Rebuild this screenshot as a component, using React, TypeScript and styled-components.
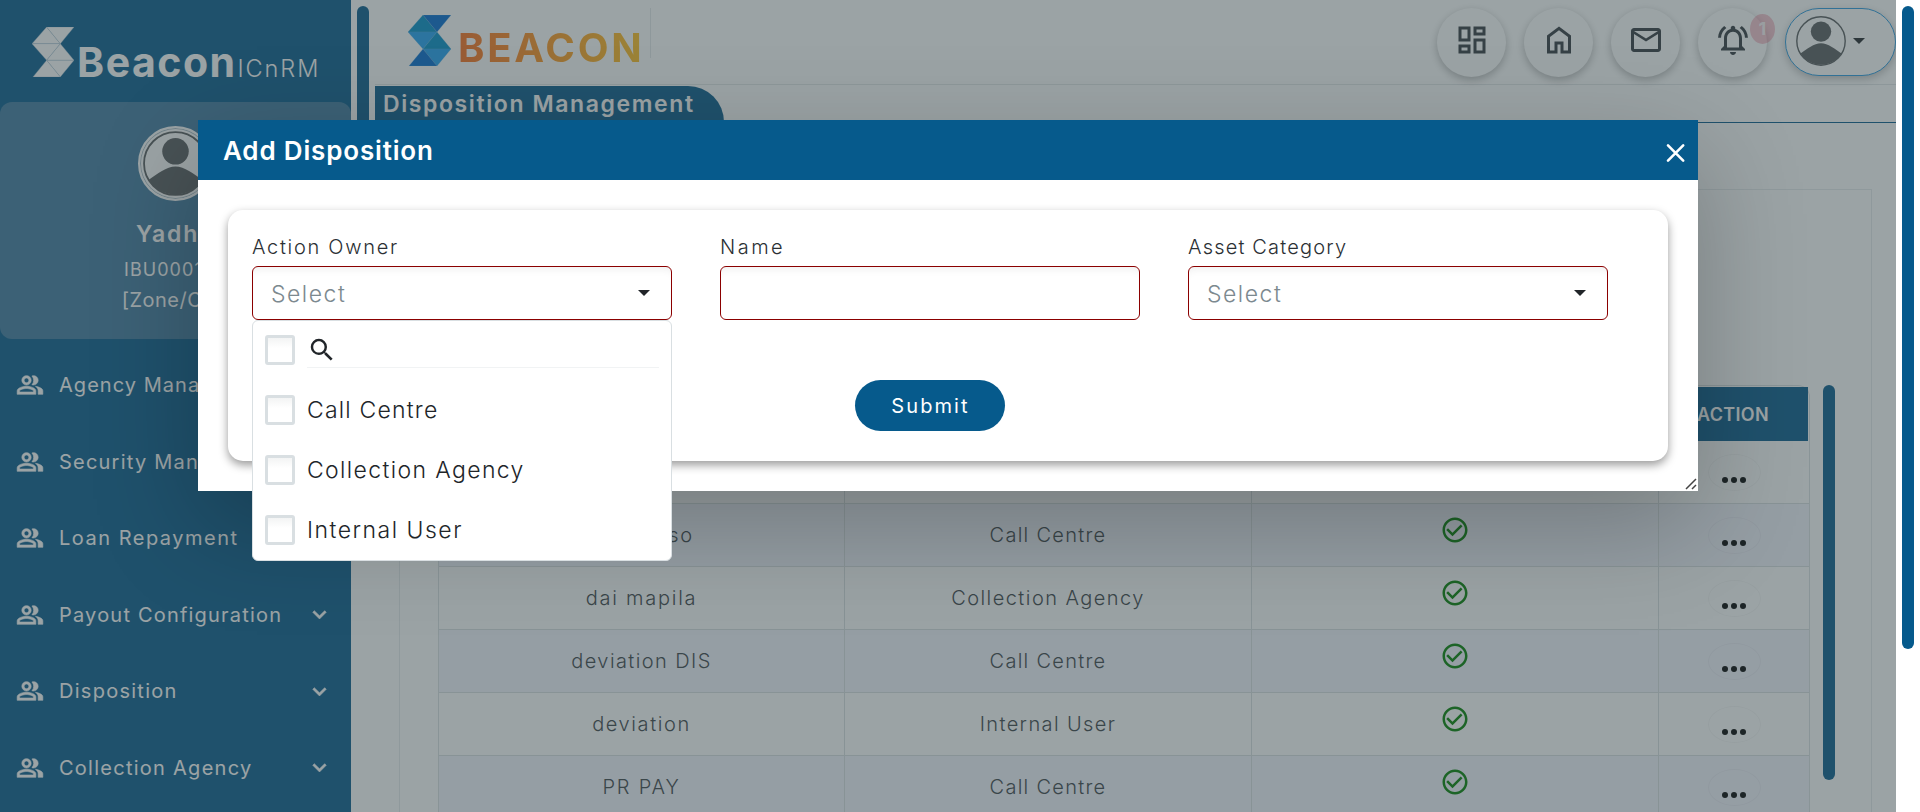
import React from "react";
import styled, { createGlobalStyle, css } from "styled-components";
import {
  MdCheckCircleOutline,
  MdExpandMore,
  MdOutlineDashboard,
  MdOutlineMail,
  MdOutlineNotificationsActive,
  MdOutlinePeopleAlt,
  MdSearch,
} from "react-icons/md";

const blue = "#065a8c";

const GlobalStyle = createGlobalStyle`
  *, *::before, *::after { box-sizing: border-box; }
  html, body { margin: 0; height: 100%; overflow: hidden; background: #fff; }
  body { font-family: Inter, Montserrat, "Open Sans", sans-serif; font-weight: 300; color: #212529; }
  button { font: inherit; padding: 0; border: 0; cursor: pointer; }
  svg { display: block; flex: none; }
`;

const Page = styled.div`
  position: relative;
  display: flex;
  width: 1920px;
  height: 812px;
  overflow: hidden;
`;

/* text with a tracking value, in pixels */
const tracked = css<{ $track?: number }>`
  letter-spacing: ${({ $track = 1.3 }) => $track}px;
  white-space: nowrap;
`;

/* ---------- sidebar ---------- */

const Sidebar = styled.aside`
  flex: none;
  width: 351px;
  background: ${blue};
  color: #fff;
  overflow: hidden;
`;

const SideBrand = styled.div`
  display: flex;
  height: 102px;
  padding: 27px 0 0 32px;
`;

const SideBrandName = styled.span`
  ${tracked}
  margin: 10px 0 0 3px;
  font-size: 41px;
  line-height: 50px;
  font-weight: 700;
`;

const SideBrandSuffix = styled.span`
  ${tracked}
  margin: 26px 0 0 1px;
  font-size: 23.5px;
  line-height: 32px;
  font-weight: 300;
`;

const ProfileCard = styled.section`
  display: flex;
  flex-direction: column;
  align-items: center;
  height: 237px;
  padding-top: 24px;
  border-radius: 12px;
  background: #407aa0;
`;

const AvatarRing = styled.div`
  display: grid;
  place-items: center;
  width: 75px;
  height: 75px;
  border: 2px solid #fff;
  border-radius: 50%;
  background: #fff;
  box-shadow: inset 0 0 0 1px #aebfc9;
`;

const ProfileName = styled.div`
  ${tracked}
  margin-top: 17px;
  font-size: 23px;
  line-height: 32px;
  font-weight: 600;
`;

const ProfileLine = styled.div<{ $size: number }>`
  ${tracked}
  margin-top: 4px;
  font-size: ${({ $size }) => $size}px;
  line-height: 31px;
  font-weight: 400;
  & + & { margin-top: 0; }
`;

const SideNav = styled.nav`
  padding-top: 8px;
`;

const SideLink = styled.a`
  display: flex;
  align-items: center;
  height: 76.5px;
  padding: 0 18px 0 16px;
  svg path:not([fill="none"]) { stroke: currentColor; stroke-width: 0.5; }
  svg path[fill="none"] { stroke: none; }
`;

const SideLabel = styled.span`
  ${tracked}
  flex: 1;
  margin-left: 15px;
  font-size: 20px;
  font-weight: 400;
`;

/* ---------- scrollbars ---------- */

const ScrollTrack = styled.div`
  flex: none;
  width: 24px;
  padding: 6px 0 0 6px;
  background: #fff;
`;

const ScrollThumb = styled.div<{ $length: number }>`
  width: 12px;
  height: ${({ $length }) => $length}px;
  border-radius: 6px;
  background: ${blue};
`;

/* ---------- main area ---------- */

const Main = styled.main`
  flex: 1;
  min-width: 0;
  overflow: hidden;
  background: #fff;
`;

const TopBar = styled.header`
  display: flex;
  height: 85px;
  padding: 8px 0 0 33px;
  border-bottom: 1px solid #e2e6e8;
`;

const TopLogo = styled.div`
  display: flex;
  align-items: flex-start;
  width: 243px;
  height: 50px;
  padding-top: 7px;
  border-right: 1px solid #e4e8ea;
`;

const TopLogoName = styled.span`
  ${tracked}
  margin: 8px 0 0 7px;
  font-size: 40px;
  line-height: 50px;
  font-weight: 700;
  color: transparent;
  background: linear-gradient(90deg, #fb6e1e, #ffc121);
  background-clip: text;
  -webkit-background-clip: text;
`;

const TopActions = styled.div`
  display: flex;
  gap: 18px;
  margin-left: auto;
`;

const RoundButton = styled.button`
  position: relative;
  display: grid;
  place-items: center;
  width: 69px;
  height: 69px;
  padding-bottom: 5px;
  border-radius: 50%;
  background: #fff;
  color: #343a40;
  box-shadow: 0 3px 8px rgba(0, 0, 0, 0.28);
`;

const Badge = styled.span`
  position: absolute;
  top: 6px;
  left: 52px;
  width: 25px;
  height: 30px;
  border-radius: 50%;
  background: rgba(220, 53, 90, 0.3);
  color: rgba(255, 255, 255, 0.85);
  font-size: 18px;
  line-height: 29px;
  font-weight: 700;
  text-align: center;
`;

const UserMenu = styled.button`
  display: flex;
  align-items: center;
  gap: 7px;
  width: 111px;
  height: 68px;
  padding: 0 0 2px 10px;
  border: 1px solid #2a9be0;
  border-radius: 34px;
  background: #fff;
  box-shadow: 0 3px 8px rgba(0, 0, 0, 0.25);
  color: #212529;
`;

const TitleBar = styled.div`
  display: flex;
  height: 38px;
  padding-top: 1px;
  border-bottom: 1px solid ${blue};
`;

const TitleTab = styled.h1`
  ${tracked}
  width: 349px;
  margin: 0;
  padding-left: 8px;
  border-top-right-radius: 38px;
  background: ${blue};
  color: #fff;
  font-size: 23px;
  line-height: 37px;
  font-weight: 600;
`;

const ContentCard = styled.section`
  display: flex;
  align-items: flex-start;
  gap: 13px;
  width: 1473px;
  height: 700px;
  margin: 66px 0 0 24px;
  padding: 195px 0 0 38px;
  border: 1px solid #e6eaec;
`;

/* ---------- table ---------- */

const Table = styled.div`
  width: 1372px;
  padding-top: 1px;
  border: 1px solid #dbe0e3;
  border-bottom: 0;
  border-top-right-radius: 12px;
`;

const rowColumns = css`
  display: grid;
  grid-template-columns: 406px 407px 407px 150px;
`;

const TableHead = styled.div`
  ${rowColumns}
  height: 54px;
  margin-right: 1px;
  background: ${blue};
  color: #fff;
`;

const HeadCell = styled.div`
  ${tracked}
  display: grid;
  place-items: center;
  padding-right: 2px;
  font-size: 18px;
  font-weight: 600;
`;

const TableRow = styled.div<{ $alt: boolean }>`
  ${rowColumns}
  height: 63px;
  background: ${({ $alt }) => ($alt ? "#f3f4fd" : "#fff")};
  border-bottom: 1px solid #d9dee1;
`;

const Cell = styled.div`
  ${tracked}
  display: grid;
  place-items: center;
  border-right: 1px solid #d9dee1;
  color: #3b4347;
  font-size: 20px;
  &:last-child { border-right: 0; }
`;

const StatusCell = styled(Cell)`
  padding-bottom: 11px;
  color: #008000;
`;

const MoreButton = styled.button`
  display: flex;
  justify-content: center;
  align-items: flex-end;
  gap: 3px;
  width: 53px;
  height: 37px;
  padding-bottom: 7px;
  border: 1px solid rgba(0, 0, 0, 0.04);
  border-radius: 50%;
  background: transparent;
`;

const Dot = styled.i`
  width: 6px;
  height: 6px;
  border-radius: 50%;
  background: #000;
`;

/* ---------- modal ---------- */

const Backdrop = styled.div`
  position: absolute;
  inset: 0 24px 0 0;
  overflow: hidden;
  background: rgba(57, 74, 78, 0.504);
`;

const Modal = styled.div`
  width: 1500px;
  height: 371px;
  margin: 120px 0 0 198px;
  background: #fff;
  box-shadow: 0 35px 100px rgba(0, 0, 0, 0.24);
`;

const ModalHeader = styled.div`
  display: flex;
  align-items: center;
  justify-content: space-between;
  height: 60px;
  padding: 0 12px 0 25px;
  background: ${blue};
  color: #fff;
`;

const ModalTitle = styled.h2`
  ${tracked}
  margin: 0;
  padding-top: 2px;
  font-size: 26px;
  line-height: 40px;
  font-weight: 600;
`;

const CloseButton = styled.button`
  display: grid;
  place-items: center;
  padding-top: 6px;
  background: transparent;
  color: #fff;
`;

const ModalBody = styled.div`
  position: relative;
  padding: 30px;
`;

const FormCard = styled.form`
  display: flex;
  flex-direction: column;
  height: 251px;
  padding: 24px;
  border-radius: 15px;
  background: #fff;
  box-shadow: 0 4px 10px rgba(0, 0, 0, 0.4);
`;

const Fields = styled.div`
  display: flex;
  gap: 48px;
`;

const Field = styled.div`
  position: relative;
  width: 420px;
`;

const Label = styled.label`
  ${tracked}
  display: block;
  height: 32px;
  color: #2b3034;
  font-size: 20px;
  line-height: 26px;
`;

const Control = styled.div`
  display: flex;
  align-items: center;
  justify-content: space-between;
  height: 54px;
  padding: 0 21px 0 18px;
  border: 1px solid #8b0000;
  border-radius: 6px;
  background: #fff;
  color: #212529;
  box-shadow: inset 0 8px 8px -6px rgba(0, 0, 0, 0.07);
`;

const Placeholder = styled.span`
  ${tracked}
  padding-top: 1px;
  color: #7c898f;
  font-size: 23px;
`;

const SubmitButton = styled.button`
  ${tracked}
  width: 150px;
  height: 51px;
  margin: 60px 0 0 603px;
  padding-left: 1px;
  border-radius: 26px;
  background: ${blue};
  color: #fff;
  font-size: 20px;
  font-weight: 400;
`;

const Menu = styled.div`
  position: absolute;
  top: 86px;
  left: 0;
  width: 420px;
  height: 241px;
  border: 1px solid #d9dfe2;
  border-radius: 6px;
  background: #fff;
`;

const Option = styled.div`
  display: flex;
  align-items: center;
  height: 60px;
  padding: 0 12px;
  gap: 12px;
  &:first-child { height: 59px; padding-bottom: 1px; }
`;

const CheckBox = styled.span`
  flex: none;
  width: 30px;
  height: 30px;
  border: 3px solid #d9dfe2;
  border-radius: 3px;
  background: linear-gradient(#f3f4f4, #fff 10px);
`;

const OptionLabel = styled.span`
  ${tracked}
  font-size: 23px;
  line-height: 30px;
`;

const SearchBox = styled.div`
  flex: 1;
  height: 36px;
  padding: 3px 0 0;
  border-bottom: 1px solid #f1f3f4;
`;

const ResizeGrip = styled.svg`
  position: absolute;
  right: 1px;
  bottom: 1px;
`;

/* ---------- drawings ---------- */

function PrismLogo({ white }: { white?: boolean }) {
  const teal = white ? "#fff" : "#008ec8";
  const deep = white ? "#fff" : "#0069d0";
  const sky = white ? "#fff" : "#1fa0f2";
  return (
    <svg
      width={white ? 42 : 43}
      height={white ? 50 : 51}
      viewBox="0 0 43 51"
      stroke={white ? "#a9bfcd" : "#5cb0dc"}
      strokeWidth={white ? 0.4 : 0.25}
    >
      <path d="M15 0 0 17h29z" fill={teal} />
      <path d="M15 0h28L29 17z" fill={deep} />
      <path d="M0 17h29L15 34z" fill={sky} />
      <path d="m29 17 14 17H15z" fill={teal} />
      <path d="M15 34h28L29 51z" fill={sky} />
      <path d="m15 34 14 17H1z" fill={deep} />
    </svg>
  );
}

function Avatar({ size }: { size: number }) {
  return (
    <svg width={size} height={size} viewBox="0 0 50 50">
      <circle cx="25" cy="25" r="24.2" fill="#fff" stroke="#585c5e" strokeWidth="1.4" />
      <circle cx="25" cy="15.6" r="10.2" fill="#585c5e" />
      <path d="M4.5 37.5C11 33 18 27.3 25 27.3S39 33 45.5 37.5A24.2 24.2 0 0 1 4.5 37.5z" fill="#585c5e" />
    </svg>
  );
}

function HomeIcon() {
  return (
    <svg width="36" height="36" viewBox="0 0 24 24" fill="currentColor">
      <path d="M6 19h3v-6h6v6h3v-9l-6-4.5L6 10zm-2 2V9l8-6 8 6v12h-7v-6h-2v6z" />
    </svg>
  );
}

function Caret() {
  return (
    <svg width="12" height="6" viewBox="0 0 12 6" fill="currentColor">
      <path d="M0 0h12L6 6z" />
    </svg>
  );
}

function CloseIcon() {
  return (
    <svg width="20" height="20" viewBox="0 0 20 20" stroke="currentColor" strokeWidth="2.6" strokeLinecap="round">
      <path d="m2 2.4 15.2 15.2M17.2 2.4 2 17.6" />
    </svg>
  );
}

/* ---------- data ---------- */

const links: { text: string; track: number; open: boolean }[] = [
  { text: "Agency Management", track: 1.04, open: false },
  { text: "Security Management", track: 1.22, open: false },
  { text: "Loan Repayment", track: 1.5, open: false },
  { text: "Payout Configuration", track: 1.2, open: true },
  { text: "Disposition", track: 1.27, open: true },
  { text: "Collection Agency", track: 1.26, open: true },
];

const ownerTrack: Record<string, number> = {
  "Call Centre": 1.27,
  "Collection Agency": 1.44,
  "Internal User": 1.38,
};

const rows: { name: string; track: number; owner: string }[] = [
  { name: "test", track: 1, owner: "Call Centre" },
  { name: "dai ma so", track: 1.7, owner: "Call Centre" },
  { name: "dai mapila", track: 1.75, owner: "Collection Agency" },
  { name: "deviation DIS", track: 1.4, owner: "Call Centre" },
  { name: "deviation", track: 1.6, owner: "Internal User" },
  { name: "PR PAY", track: 1.8, owner: "Call Centre" },
];

const options: { text: string; track: number }[] = [
  { text: "Call Centre", track: 1.2 },
  { text: "Collection Agency", track: 1.37 },
  { text: "Internal User", track: 1.5 },
];

export default function App() {
  return (
    <Page>
      <GlobalStyle />
      <Sidebar>
        <SideBrand>
          <PrismLogo white />
          <SideBrandName $track={1.5}>Beacon</SideBrandName>
          <SideBrandSuffix $track={1.9}>ICnRM</SideBrandSuffix>
        </SideBrand>
        <ProfileCard>
          <AvatarRing>
            <Avatar size={65} />
          </AvatarRing>
          <ProfileName $track={1.8}>Yadhu</ProfileName>
          <ProfileLine $size={18} $track={1.05}>IBU000123</ProfileLine>
          <ProfileLine $size={20} $track={0.5}>[Zone/Cty]</ProfileLine>
        </ProfileCard>
        <SideNav>
          {links.map((l) => (
            <SideLink key={l.text}>
              <MdOutlinePeopleAlt size={28} />
              <SideLabel $track={l.track}>{l.text}</SideLabel>
              {l.open && <MdExpandMore size={27} />}
            </SideLink>
          ))}
        </SideNav>
      </Sidebar>

      <ScrollTrack>
        <ScrollThumb $length={500} />
      </ScrollTrack>

      <Main>
        <TopBar>
          <TopLogo>
            <PrismLogo />
            <TopLogoName $track={2.8}>BEACON</TopLogoName>
          </TopLogo>
          <TopActions>
            <RoundButton><MdOutlineDashboard size={36} /></RoundButton>
            <RoundButton><HomeIcon /></RoundButton>
            <RoundButton><MdOutlineMail size={36} /></RoundButton>
            <RoundButton>
              <MdOutlineNotificationsActive size={36} />
              <Badge>1</Badge>
            </RoundButton>
            <UserMenu>
              <Avatar size={50} />
              <Caret />
            </UserMenu>
          </TopActions>
        </TopBar>
        <TitleBar>
          <TitleTab $track={1.6}>Disposition Management</TitleTab>
        </TitleBar>
        <ContentCard>
          <Table>
            <TableHead>
              <HeadCell>NAME</HeadCell>
              <HeadCell>ACTION OWNER</HeadCell>
              <HeadCell>STATUS</HeadCell>
              <HeadCell $track={0.33}>ACTION</HeadCell>
            </TableHead>
            {rows.map((r, i) => (
              <TableRow key={i} $alt={i % 2 === 1}>
                <Cell $track={r.track}>{r.name}</Cell>
                <Cell $track={ownerTrack[r.owner]}>{r.owner}</Cell>
                <StatusCell><MdCheckCircleOutline size={30} /></StatusCell>
                <Cell>
                  <MoreButton><Dot /><Dot /><Dot /></MoreButton>
                </Cell>
              </TableRow>
            ))}
          </Table>
          <ScrollThumb $length={395} />
        </ContentCard>
      </Main>

      <ScrollTrack>
        <ScrollThumb $length={643} />
      </ScrollTrack>

      <Backdrop>
        <Modal>
          <ModalHeader>
            <ModalTitle $track={0.83}>Add Disposition</ModalTitle>
            <CloseButton><CloseIcon /></CloseButton>
          </ModalHeader>
          <ModalBody>
            <FormCard>
              <Fields>
                <Field>
                  <Label $track={1.7}>Action Owner</Label>
                  <Control>
                    <Placeholder $track={1.5}>Select</Placeholder>
                    <Caret />
                  </Control>
                  <Menu>
                    <Option>
                      <CheckBox />
                      <SearchBox><MdSearch size={30} /></SearchBox>
                    </Option>
                    {options.map((o) => (
                      <Option key={o.text}>
                        <CheckBox />
                        <OptionLabel $track={o.track}>{o.text}</OptionLabel>
                      </Option>
                    ))}
                  </Menu>
                </Field>
                <Field>
                  <Label $track={2.5}>Name</Label>
                  <Control />
                </Field>
                <Field>
                  <Label $track={1.18}>Asset Category</Label>
                  <Control>
                    <Placeholder $track={1.5}>Select</Placeholder>
                    <Caret />
                  </Control>
                </Field>
              </Fields>
              <SubmitButton type="button" $track={2.1}>Submit</SubmitButton>
            </FormCard>
            <ResizeGrip width="12" height="12" viewBox="0 0 12 12" stroke="#444" strokeWidth="1.5">
              <path d="M1 11 11 1M7 11l4-4" />
            </ResizeGrip>
          </ModalBody>
        </Modal>
      </Backdrop>
    </Page>
  );
}
